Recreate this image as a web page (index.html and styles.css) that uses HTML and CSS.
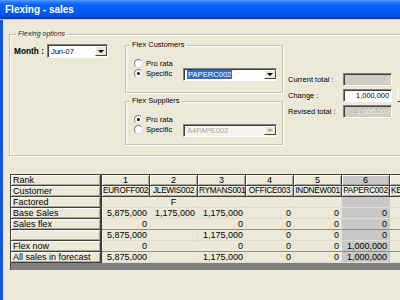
FILE: index.html
```html
<!DOCTYPE html>
<html lang="en">
<head>
  <title>Flexing - sales</title>
  <link rel="stylesheet" href="styles.css">
</head>
<body>
  <div class="window">
    <div class="titlebar">Flexing - sales</div>
    <div class="client">
      <fieldset class="options">
        <legend>Flexing options</legend>
        <div class="month">
          <span class="month-label">Month :</span>
          <div class="combo month-combo"><span class="combo-text">Jun-07</span><span class="combo-btn"><i class="arrow"></i></span></div>
        </div>

        <div class="flex-groups">
          <fieldset class="group customers">
            <legend>Flex Customers</legend>
            <div class="group-body">
              <div class="radios">
                <div class="radio"><span class="dot"></span>Pro rata</div>
                <div class="radio"><span class="dot checked"></span>Specific</div>
              </div>
              <div class="combo wide"><span class="combo-text"><span class="selected">PAPERC002</span></span><span class="combo-btn"><i class="arrow"></i></span></div>
            </div>
          </fieldset>

          <fieldset class="group suppliers">
            <legend>Flex Suppliers</legend>
            <div class="group-body">
              <div class="radios">
                <div class="radio"><span class="dot checked"></span>Pro rata</div>
                <div class="radio"><span class="dot"></span>Specific</div>
              </div>
              <div class="combo wide disabled"><span class="combo-text">A4PAPE002</span><span class="combo-btn"><i class="arrow"></i></span></div>
            </div>
          </fieldset>
        </div>

        <div class="totals">
          <div class="total-row">
            <span class="total-label">Current total :</span>
            <span class="field disabled">0</span>
          </div>
          <div class="total-row">
            <span class="total-label">Change :</span>
            <span class="field">1,000,000</span>
            <span class="edge-btn"></span>
          </div>
          <div class="total-row">
            <span class="total-label">Revised total :</span>
            <span class="field disabled">1,000,000</span>
          </div>
        </div>
      </fieldset>

      <div class="grid">
        <table>
          <colgroup>
            <col class="c-label">
            <col class="c-data"><col class="c-data"><col class="c-data"><col class="c-data">
            <col class="c-data"><col class="c-data"><col class="c-data">
          </colgroup>
          <tr class="head">
            <th class="label">Rank</th>
            <th>1</th><th>2</th><th>3</th><th>4</th><th>5</th><th class="current">6</th><th>7</th>
          </tr>
          <tr class="head code">
            <th class="label">Customer</th>
            <th>EUROFF002</th><th>JLEWIS002</th><th>RYMANS001</th><th>OFFICE003</th><th>INDNEW001</th><th>PAPERC002</th><th class="cut">KEYPRO001</th>
          </tr>
          <tr>
            <th class="label">Factored</th>
            <td></td><td class="mid">F</td><td></td><td></td><td></td><td class="current"></td><td></td>
          </tr>
          <tr>
            <th class="label">Base Sales</th>
            <td>5,875,000</td><td>1,175,000</td><td>1,175,000</td><td>0</td><td>0</td><td class="current">0</td><td></td>
          </tr>
          <tr class="rule">
            <th class="label">Sales flex</th>
            <td>0</td><td></td><td>0</td><td>0</td><td>0</td><td class="current">0</td><td></td>
          </tr>
          <tr>
            <th class="label"></th>
            <td>5,875,000</td><td></td><td>1,175,000</td><td>0</td><td>0</td><td class="current">0</td><td></td>
          </tr>
          <tr class="rule">
            <th class="label">Flex now</th>
            <td>0</td><td></td><td>0</td><td>0</td><td>0</td><td class="current">1,000,000</td><td></td>
          </tr>
          <tr>
            <th class="label">All sales in forecast</th>
            <td>5,875,000</td><td></td><td>1,175,000</td><td>0</td><td>0</td><td class="current">1,000,000</td><td></td>
          </tr>
        </table>
      </div>
    </div>
  </div>
</body>
</html>
```

FILE: styles.css
```css
/* Flexing - sales window */
body {
  margin: 0;
  width: 400px;
  height: 300px;
  overflow: hidden;
  background: #ece9d8;
  font-family: "Liberation Sans", Arial, sans-serif;
  font-size: 7.5px;
  color: #000;
}

.window {
  height: 300px;
  display: flex;
  flex-direction: column;
}

.titlebar {
  height: 19px;
  flex: none;
  padding-left: 5px;
  line-height: 20px;
  font-size: 10px;
  font-weight: bold;
  color: #fff;
  background: linear-gradient(#5aa0ff 0, #2a7cfc 2px, #0862f5 5px, #0058ee 14px, #0048d8 17px, #0038b8 19px);
  border-bottom: 1px solid #b8c8ec;
}

.client {
  flex: 1;
  overflow: hidden;
  border-left: 3px solid #1654d8;
}

/* group boxes */
fieldset {
  margin: 0;
  padding: 0;
  min-width: 0;
  box-sizing: border-box;
  border: 1px solid #c4c1b2;
  box-shadow: inset 1px 1px #fff, 1px 1px #fff;
}

legend {
  padding: 0 2px;
  margin-left: 4px;
  line-height: 10px;
  white-space: nowrap;
}

.options {
  width: 420px;
  height: 127px;
  margin: 9px 0 0 6px;
  padding-top: 1px;
  display: flex;
  align-items: flex-start;
}

.options > legend {
  font-style: italic;
  font-size: 7px;
  color: #222;
  margin-left: 6px;
}

.month {
  width: 111px;
  padding-left: 4px;
  margin-top: 4px;
  display: flex;
  align-items: center;
  gap: 3px;
}

.month-label {
  font-weight: bold;
  font-size: 8.3px;
  white-space: nowrap;
}

/* combo boxes */
.combo {
  height: 14px;
  box-sizing: border-box;
  display: flex;
  background: #fff;
  border: 1px solid;
  border-color: #808080 #fff #fff #808080;
  box-shadow: inset 1px 1px #404040;
}

.month-combo {
  width: 61px;
}

.combo-text {
  flex: 1;
  padding: 2px 0 0 3px;
  line-height: 10px;
  white-space: nowrap;
  overflow: hidden;
}

.combo-btn {
  width: 12px;
  margin: 1px 0;
  box-sizing: border-box;
  background: #ece9d8;
  border: 1px solid;
  border-color: #fff #404040 #404040 #fff;
  display: flex;
  align-items: center;
  justify-content: center;
}

.arrow {
  width: 0;
  height: 0;
  border-left: 3px solid transparent;
  border-right: 3px solid transparent;
  border-top: 3px solid #000;
}

.selected {
  background: #316ac5;
  color: #fff;
  padding: 0 1px;
  font-size: 7.6px;
}

.combo.disabled {
  background: #f5f4ef;
  color: #aca899;
}

.combo.disabled .arrow {
  border-top-color: #aca899;
}

.flex-groups {
  display: flex;
  flex-direction: column;
  gap: 3px;
}

.group {
  width: 158px;
}

.customers {
  height: 53px;
}

.suppliers {
  height: 49px;
}

.group-body {
  display: flex;
  align-items: flex-start;
  padding: 8px 0 0 8px;
}

.radios {
  width: 49px;
}

.radio {
  height: 10px;
  display: flex;
  align-items: center;
  gap: 3px;
}

.dot {
  width: 9px;
  height: 9px;
  box-sizing: border-box;
  border-radius: 50%;
  background: #fff;
  border: 1px solid;
  border-color: #808080 #e0ddd0 #e0ddd0 #808080;
  display: flex;
  align-items: center;
  justify-content: center;
}

.dot.checked::after {
  content: "";
  width: 3px;
  height: 3px;
  border-radius: 50%;
  background: #000;
}

.wide {
  width: 94px;
  height: 13px;
  margin-top: 10px;
}

.wide .combo-text {
  padding-top: 1px;
}

/* totals */
.totals {
  margin: 33px 0 0 5px;
  display: flex;
  flex-direction: column;
  gap: 3px;
}

.total-row {
  display: flex;
  align-items: center;
  height: 13px;
}

.total-label {
  width: 55px;
  white-space: nowrap;
}

.field {
  width: 49px;
  height: 13px;
  box-sizing: border-box;
  padding-right: 2px;
  line-height: 11px;
  font-size: 7.4px;
  text-align: right;
  background: #fff;
  border: 1px solid;
  border-color: #808080 #fff #fff #808080;
  box-shadow: inset 1px 1px #404040;
}

.field.disabled {
  background: #cfcdc4;
  color: #f4f3ee;
  text-shadow: -1px -1px #aca899;
}

.edge-btn {
  width: 20px;
  height: 13px;
  margin-left: 5px;
  box-sizing: border-box;
  border: 1px solid;
  border-color: #fff #404040 #404040 #fff;
}

/* forecast grid */
.grid {
  margin: 18px 0 0 7px;
  height: 95px;
  width: 420px;
  overflow: hidden;
  background: #808080;
  border-top: 1px solid #404040;
  border-left: 1px solid #404040;
}

table {
  table-layout: fixed;
  border-collapse: separate;
  border-spacing: 0;
  width: 427px;
  background: #ece9d8;
  font-size: 9px;
}

.c-label {
  width: 91px;
}

.c-data {
  width: 48px;
}

th, td {
  height: 11px;
  box-sizing: border-box;
  padding: 0 2px;
  line-height: 10px;
  font-weight: normal;
  white-space: nowrap;
  overflow: hidden;
}

th {
  text-align: center;
  border-right: 1px solid #404040;
  border-bottom: 1px solid #404040;
  box-shadow: inset 1px 1px #fff, inset -1px -1px #aca899;
}

.code th {
  padding: 0 1px;
  font-size: 8.2px;
  letter-spacing: -0.25px;
}

.code th.label {
  font-size: 9px;
  letter-spacing: 0;
  padding: 0 2px;
}

.code th.cut {
  text-align: left;
}

th.label {
  text-align: left;
  border-right-width: 2px;
}

th.current {
  background: #c8c8c8;
}

td {
  text-align: right;
  border-bottom: 1px solid #e0ddd0;
  border-right: 1px solid #e4e1d4;
}

td.mid {
  text-align: center;
}

td.current {
  background: #c8c8c8;
  border-right-color: #c8c8c8;
}

tr.rule td {
  border-bottom-color: #8c8a80;
}
```
